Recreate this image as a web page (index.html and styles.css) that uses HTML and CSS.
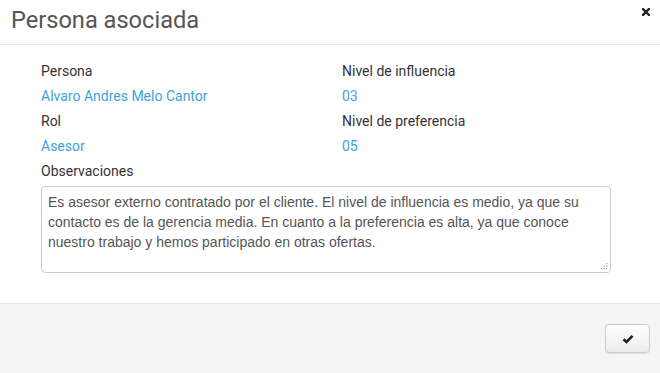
FILE: index.html
```html
<!DOCTYPE html>
<html>
   <head>
      <meta http-equiv="Content-Type" content="text/html;charset=utf-8" />
      <link rel="stylesheet" href="styles.css">
   </head>
   <body>
      <div class="modal">
         <div class="cabecera">
            <h1>Persona asociada</h1>
            <span class="cerrar">
               <svg width="8" height="8" viewBox="0 0 8 8"><path d="M1 1L7 7M7 1L1 7" stroke="#222" stroke-width="2.4" stroke-linecap="square"/></svg>
            </span>
         </div>
         <div class="cuerpo">
            <div class="fila">
               <div class="campo">
                  <div class="etiqueta">Persona</div>
                  <div class="valor">Alvaro Andres Melo Cantor</div>
               </div>
               <div class="campo">
                  <div class="etiqueta">Nivel de influencia</div>
                  <div class="valor">03</div>
               </div>
            </div>
            <div class="fila">
               <div class="campo">
                  <div class="etiqueta">Rol</div>
                  <div class="valor">Asesor</div>
               </div>
               <div class="campo">
                  <div class="etiqueta">Nivel de preferencia</div>
                  <div class="valor">05</div>
               </div>
            </div>
            <div class="etiqueta">Observaciones</div>
            <textarea class="observaciones" rows="4">Es asesor externo contratado por el cliente. El nivel de influencia es medio, ya que su contacto es de la gerencia media. En cuanto a la preferencia es alta, ya que conoce nuestro trabajo y hemos participado en otras ofertas.</textarea>
         </div>
         <div class="pie">
            <button class="boton">
               <svg width="12" height="10" viewBox="0 0 12 10"><path d="M1.5 5.2L4.5 8L10.5 1.8" fill="none" stroke="#222" stroke-width="2.6"/></svg>
            </button>
         </div>
      </div>
   </body>
</html>
```

FILE: styles.css
```css
body {
   margin: 0;
   background: #fff;
   font-family: Roboto, "Liberation Sans", sans-serif;
}

.modal {
   width: 660px;
   height: 373px;
   display: flex;
   flex-direction: column;
}

.cabecera {
   height: 45px;
   border-bottom: 1px solid #e5e5e5;
   display: flex;
   justify-content: space-between;
   align-items: flex-start;
   padding: 0 10px 0 11px;
   box-sizing: border-box;
}

.cabecera h1 {
   margin: 0;
   font-size: 23.6px;
   font-weight: 400;
   color: #555;
   line-height: 41px;
}

.cerrar {
   display: flex;
   padding-top: 8px;
}

.cuerpo {
   padding: 14px 49px 0 41px;
   height: 259px;
   box-sizing: border-box;
   border-bottom: 1px solid #e5e5e5;
}

.fila {
   display: grid;
   grid-template-columns: 301px 1fr;
}

.etiqueta {
   font-size: 14px;
   color: #333;
   line-height: 25px;
}

.valor {
   font-size: 14px;
   color: #3ea3da;
   line-height: 25px;
}

.observaciones {
   display: block;
   margin-top: 2px;
   width: 570px;
   height: 87px;
   box-sizing: border-box;
   border: 1px solid #ccc;
   border-radius: 4px;
   padding: 5px 6px;
   font-family: "Liberation Sans", Arial, sans-serif;
   font-size: 14px;
   line-height: 20px;
   color: #555;
   resize: none;
   background: #fff url("data:image/svg+xml,%3Csvg xmlns='http://www.w3.org/2000/svg' width='7' height='7'%3E%3Cg fill='%23aaa'%3E%3Crect x='5' y='0' width='1.3' height='1.3'/%3E%3Crect x='2.5' y='2.5' width='1.3' height='1.3'/%3E%3Crect x='5' y='2.5' width='1.3' height='1.3'/%3E%3Crect x='0' y='5' width='1.3' height='1.3'/%3E%3Crect x='2.5' y='5' width='1.3' height='1.3'/%3E%3Crect x='5' y='5' width='1.3' height='1.3'/%3E%3C/g%3E%3C/svg%3E") no-repeat right 2px bottom 2px;
}

.pie {
   flex: 1;
   background: #f5f5f5;
   display: flex;
   justify-content: flex-end;
   align-items: flex-start;
   padding: 20px 10px 0 0;
}

.boton {
   width: 45px;
   height: 29px;
   border: 1px solid #ccc;
   border-radius: 4px;
   background: linear-gradient(#fff, #ececec);
   box-shadow: 0 1px 1px rgba(0,0,0,0.08);
   display: flex;
   align-items: center;
   justify-content: center;
   padding: 0;
}
```
